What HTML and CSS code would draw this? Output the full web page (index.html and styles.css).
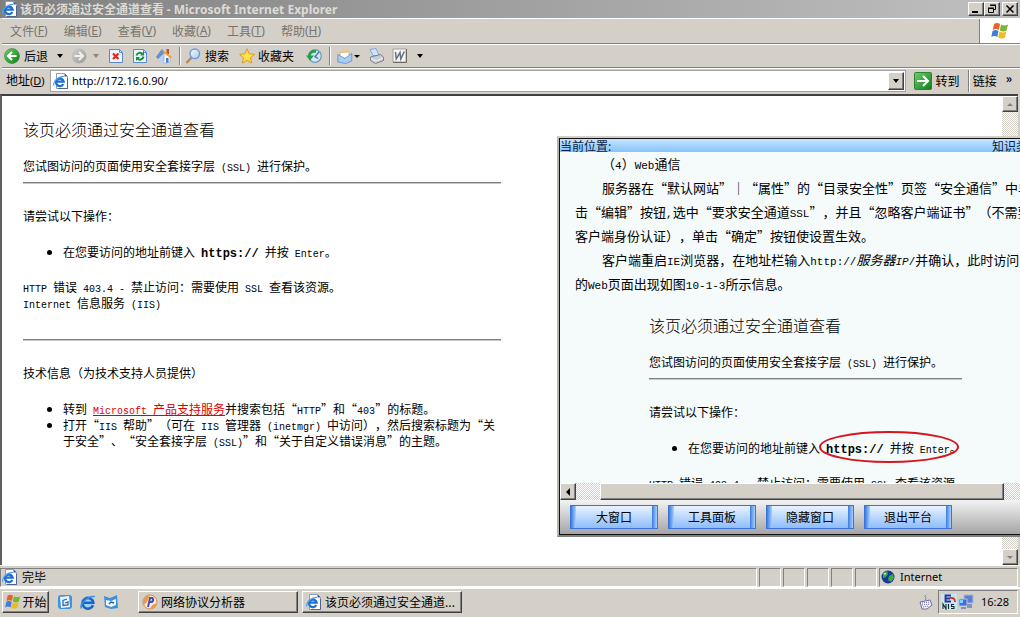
FILE: index.html
```html
<!DOCTYPE html>
<html lang="zh-CN">
<head>
<meta charset="utf-8">
<title>该页必须通过安全通道查看</title>
<link rel="stylesheet" href="styles.css">
</head>
<body>
<svg class="defs" aria-hidden="true">
  <defs>
    <linearGradient id="green" x1="0" y1="0" x2="1" y2="1"><stop offset="0" stop-color="#6fce6a"/><stop offset="1" stop-color="#0f7d1c"/></linearGradient>
    <linearGradient id="glass" x1="0" y1="0" x2="1" y2="1"><stop offset="0" stop-color="#ffffff"/><stop offset="1" stop-color="#9fc6f2"/></linearGradient>
    <linearGradient id="gray" x1="0" y1="0" x2="1" y2="1"><stop offset="0" stop-color="#cfcfcd"/><stop offset="1" stop-color="#9b9b99"/></linearGradient>
    <symbol id="page" viewBox="0 0 16 16">
      <path d="M3.5 .5h8l3 3v12h-11z" fill="#fdfdff" stroke="#8d9dbf"/>
      <path d="M11.5.5v3h3z" fill="#34548f"/>
      <path d="M14.5 5v10.500H5" fill="none" stroke="#4d628e"/>
      <path d="M10.300 11A3.800 3.800 0 1 1 10.600 8.600H3.500" fill="none" stroke="#1d6fd0" stroke-width="2.300"/>
      <path d="M.8 12.500C-.5 8.500 6 3 11 3.500" fill="none" stroke="#4ba0ee" stroke-width="1.200"/>
    </symbol>
    <symbol id="ie" viewBox="0 0 16 16">
      <circle cx="8" cy="8.500" r="6.600" fill="#9fd2f7"/>
      <path d="M13 11.200A5.400 5.400 0 1 1 13.300 8.800H4" fill="none" stroke="#1a66c4" stroke-width="2.600"/>
      <path d="M1.500 14.500C-1 10 8 1.500 14.800 2.500" fill="none" stroke="#3b8fe0" stroke-width="1.500"/>
    </symbol>
    <symbol id="flag" viewBox="0 0 20 20">
      <path d="M4 3q3-2 6 0L8.800 9q-3-2-6 0z" fill="#e8622c"/>
      <path d="M11 3.500q3 2 7 0L16.500 9.500q-3 2-6.700 0z" fill="#7cb62f"/>
      <path d="M2.500 10q3-2 6 0L7.300 16q-3-2-6 0z" fill="#3e7fdb"/>
      <path d="M9.500 10.500q3 2 6.800 0L15 16.500q-3 2-6.800 0z" fill="#f4b91f"/>
    </symbol>
    <symbol id="sheet" viewBox="0 0 16 16">
      <path d="M1.500 1.500h10l3 3v10h-13z" fill="#eaf3ff" stroke="#5a8ccf"/>
      <path d="M11.500 1.500v3h3" fill="none" stroke="#5a8ccf"/>
    </symbol>
  </defs>
</svg>

<header class="titlebar">
  <svg class="ic"><use href="#page"/></svg>
  <h1>该页必须通过安全通道查看 <span class="ui">- Microsoft Internet Explorer</span></h1>
  <div class="winbtns">
    <button class="bevel" aria-label="最小化"><svg viewBox="0 0 12 10"><path d="M2 7h6v2H2z"/></svg></button>
    <button class="bevel" aria-label="还原"><svg viewBox="0 0 12 10"><path d="M4.500 1.500h5v4h-2M4 1h6M2.500 4.500h5v4h-5zM2 4h6" fill="none" stroke="#000"/></svg></button>
    <button class="bevel close" aria-label="关闭"><svg viewBox="0 0 12 10"><path d="M2.500 1.500l7 7M9.500 1.500l-7 7" stroke="#000" stroke-width="1.500"/></svg></button>
  </div>
</header>

<nav class="menubar">
  <button>文件<span class="ui">(<u>F</u>)</span></button>
  <button>编辑<span class="ui">(<u>E</u>)</span></button>
  <button>查看<span class="ui">(<u>V</u>)</span></button>
  <button>收藏<span class="ui">(<u>A</u>)</span></button>
  <button>工具<span class="ui">(<u>T</u>)</span></button>
  <button>帮助<span class="ui">(<u>H</u>)</span></button>
  <div class="brand"><svg width="22" height="20"><use href="#flag"/></svg></div>
</nav>

<div class="toolbar">
  <button><svg class="ic" viewBox="0 0 16 16"><circle cx="8" cy="8" r="7.500" fill="url(#green)" stroke="#2b8a33" stroke-width=".6"/><path d="M12.500 8H4.500M8 4L4 8l4 4" fill="none" stroke="#fff" stroke-width="2"/></svg>后退</button>
  <button class="drop" aria-label="后退列表"><i></i></button>
  <button aria-label="前进"><svg class="ic" viewBox="0 0 16 16"><circle cx="8" cy="8" r="7.500" fill="url(#gray)"/><path d="M3.500 8h8M8 4l4 4-4 4" fill="none" stroke="#f1f1ef" stroke-width="2"/></svg></button>
  <button class="drop off" aria-label="前进列表"><i></i></button>
  <button class="solo" aria-label="停止"><svg class="ic" viewBox="0 0 16 16"><use href="#sheet"/><path d="M5 5.500l5.500 5.500M10.500 5.500L5 11" stroke="#dc2a1c" stroke-width="2.200"/></svg></button>
  <button class="solo" aria-label="刷新"><svg class="ic" viewBox="0 0 16 16"><use href="#sheet"/><path d="M4.500 7.500C5 4.500 9 4 10.500 6M11.500 8.500C11 12 7 12.500 5.500 10.500" fill="none" stroke="#189030" stroke-width="2"/><path d="M12 3.500v4H8zM4 13V9h4z" fill="#189030"/></svg></button>
  <button class="solo" aria-label="主页"><svg class="ic" viewBox="0 0 16 16"><path d="M10.500 1h2.500v5h-2.500z" fill="#c8502c"/><path d="M3 8v6.500l5 1V6z" fill="#b9d0f0"/><path d="M8 5v10.500l6-1.500V8z" fill="#f5f9ff" stroke="#88a6d4" stroke-width=".6"/><path d="M10 10h2.500v4.300l-2.500.6z" fill="#4a7bc5"/><path d="M6 1l10 8-1.500 1.500L8 5 2 11 0 9z" fill="#f0a23c"/><path d="M0 9l6-8 2 4-6 6z" fill="#5d93dd"/></svg></button>
  <span class="sep"></span>
  <button><svg class="ic" viewBox="0 0 16 16"><path d="M6.500 9.500l-5 5.500" stroke="#b58a55" stroke-width="2.400"/><circle cx="9.800" cy="5.800" r="4.800" fill="url(#glass)" stroke="#6c9bd6" stroke-width="1.300"/></svg>搜索</button>
  <button class="fav"><svg class="ic" viewBox="0 0 16 16"><path d="M8 .8l2.200 4.900 5.300.6-4 3.500 1.200 5.300L8 12.400l-4.700 2.700 1.200-5.300-4-3.500 5.300-.6z" fill="#ffe04a" stroke="#d99b1c"/></svg>收藏夹</button>
  <button class="hist" aria-label="历史"><svg class="ic" viewBox="0 0 16 16"><circle cx="9" cy="8" r="6.300" fill="#cfe5fa" stroke="#6d9fae" stroke-width="1.300"/><path d="M13 4L9 8.500l3 2" fill="none" stroke="#4c6f9e" stroke-width="1.300"/><path d="M3.500 9C3 5 6 3 10 3.500" fill="none" stroke="#26a046" stroke-width="2.600"/><path d="M0 7.500h8L4 12.500z" fill="#26a046"/></svg></button>
  <span class="sep"></span>
  <button class="mail" aria-label="邮件"><svg class="ic" viewBox="0 0 16 16"><path d="M1 6l7-5 6 4v9H1z" fill="#f6c679"/><path d="M3 4.500l9-.5v6H3z" fill="#fff" stroke="#d7a661" stroke-width=".7"/><path d="M.8 6.500l7 4 7-5V13l-6 2.500-8-1.500z" fill="#a7cdf5" stroke="#5d8ecf" stroke-width=".8"/></svg><i></i></button>
  <button class="print" aria-label="打印"><svg class="ic" viewBox="0 0 16 16"><path d="M2 1.500l6-1 3 7H5z" fill="#cfe3fb" stroke="#6f9bd5" stroke-width=".8"/><path d="M2.500 9l10-2.500 3 2.500v3.500l-8 3-5-3z" fill="#c9ccd2" stroke="#737985" stroke-width=".9"/><path d="M3 10.500l5 2.500 7-3" fill="none" stroke="#f8f8f8"/></svg></button>
  <button class="word" aria-label="编辑"><svg class="ic" viewBox="0 0 16 16"><path d="M1 1h13v13H1z" fill="#f7f6f2" stroke="#a5a39e"/><path d="M14.500 1v13.500H1" fill="none" stroke="#6b6964"/><path d="M3.500 4l.7 7L8 4.500l.8 6.500L12.300 3.500" fill="none" stroke="#66727f" stroke-width="1.500"/></svg></button>
  <button class="drop" aria-label="编辑列表"><i></i></button>
</div>

<form class="address">
  <label for="url">地址<span class="ui">(<u>D</u>)</span></label>
  <div class="combo">
    <svg class="ic"><use href="#page"/></svg>
    <input id="url" class="ui" type="text" value="http://172.16.0.90/">
    <button type="button" class="bevel" aria-label="展开"><i></i></button>
  </div>
  <button type="button" class="go"><svg viewBox="0 0 18 18" width="18" height="18"><rect x=".5" y=".5" width="17" height="17" rx="1" fill="url(#green)" stroke="#2d8435"/><path d="M3 9h11M9 4l5 5-5 5" fill="none" stroke="#fff" stroke-width="2"/></svg>转到</button>
  <button type="button" class="links">链接<span class="more">»</span></button>
</form>

<div class="view">
  <main class="doc">
    <h2>该页必须通过安全通道查看</h2>
    <p>您试图访问的页面使用安全套接字层<span class="m"> (SSL) </span>进行保护。</p>
    <hr>
    <p class="try">请尝试以下操作：</p>
    <ul><li>在您要访问的地址前键入<span class="m"> <b>https://</b> </span>并按<span class="m"> Enter</span>。</li></ul>
    <p class="err"><span class="m">HTTP </span>错误<span class="m"> 403.4 - </span>禁止访问：需要使用<span class="m"> SSL </span>查看该资源。<br><span class="m">Internet </span>信息服务<span class="m"> (IIS)</span></p>
    <hr>
    <p class="tech">技术信息（为技术支持人员提供）</p>
    <ul>
      <li>转到<span class="m"> </span><a href="#"><span class="m">Microsoft </span>产品支持服务</a>并搜索包括“<span class="m">HTTP</span>”和“<span class="m">403</span>”的标题。</li>
      <li>打开“<span class="m">IIS </span>帮助”（可在<span class="m"> IIS </span>管理器<span class="m"> (inetmgr) </span>中访问），然后搜索标题为“关于安全”、“安全套接字层<span class="m"> (SSL)</span>”和“关于自定义错误消息”的主题。</li>
    </ul>
  </main>
  <div class="vscroll dither">
    <button class="bevel" aria-label="向上"><i class="up"></i></button>
    <button class="bevel" aria-label="向下"><i></i></button>
  </div>
</div>

<footer class="status">
  <div class="pane main"><svg class="ic"><use href="#page"/></svg>完毕</div>
  <div class="pane"></div><div class="pane"></div><div class="pane"></div><div class="pane"></div><div class="pane"></div>
  <div class="pane zone"><svg class="ic" viewBox="0 0 16 16"><circle cx="8" cy="8" r="6.500" fill="#163a9c"/><path d="M3 4l4-2 1 3-2 3-3 1zM9 7l4-2 1 4-3 4-3-2z" fill="#3cab3b"/><path d="M4 4h2v1.500H4z" fill="#aee7ff"/></svg><span class="ui">Internet</span></div>
</footer>

<div class="taskbar">
  <button class="bevel start"><svg width="18" height="18"><use href="#flag"/></svg>开始</button>
  <div class="quick">
    <button aria-label="显示桌面"><svg class="ic" viewBox="0 0 16 16"><rect x="1" y="1" width="14" height="14" rx="3" fill="#3e93de"/><path d="M3 3l9-1 1 11-9 1z" fill="#eef6ff"/><path d="M10 5L6 6.500v5l5-.5V8L8 9" fill="none" stroke="#2a6bb4" stroke-width="1.300"/></svg></button>
    <button aria-label="浏览器"><svg class="ic"><use href="#ie"/></svg></button>
    <button aria-label="邮件程序"><svg class="ic" viewBox="0 0 16 16"><path d="M1 2l6 2 7-3 1 13-7 1-6-2z" fill="#3c91dc"/><path d="M3 6l5 1 5-2v6l-5 2-5-2z" fill="#f1f7ff"/><path d="M6 10l2-2 3 1" fill="none" stroke="#25609f" stroke-width="1.500"/></svg></button>
  </div>
  <button class="bevel task"><svg class="ic" viewBox="0 0 16 16"><circle cx="8" cy="8" r="7" fill="#f7efe4" stroke="#d08a4a"/><path d="M8 1a7 7 0 0 0-6 10l3-3z" fill="#e89a4e"/><path d="M15 9a7 7 0 0 1-7 6l2-4z" fill="#e89a4e"/><path d="M6 13L8 4h2.500q1.500 2-.5 4H8" fill="none" stroke="#5546b0" stroke-width="2"/></svg>网络协议分析器</button>
  <button class="bevel task"><svg class="ic"><use href="#page"/></svg>该页必须通过安全通道...</button>
  <svg class="ic ime" viewBox="0 0 16 16"><path d="M8 1c-3 2 2 3-1 5" fill="none" stroke="#7e7e92"/><path d="M2 8l10-2 2 5-5 4H4z" fill="#f3f3fb" stroke="#6a6fa6"/><path d="M4 9l8-1M4 11l8-1M5 13l6-1" stroke="#6a6fa6" stroke-dasharray="1 1"/></svg>
  <div class="tray">
    <svg class="ic" viewBox="0 0 16 16"><path d="M0 0h16v16H0z" fill="#c5e8ee"/><path d="M10 1.500H4.500v6H10M4.500 4.500H9" fill="none" stroke="#26359c" stroke-width="1.800"/><path d="M9 4q5-1 5 4" fill="none" stroke="#d42b2b" stroke-width="1.800"/><path d="M2 15v-5l3 5v-5M7.500 10v5M13 10.500h-2.500v2H13v2h-3" fill="none" stroke="#142a2e" stroke-width="1.100"/></svg>
    <svg class="ic" viewBox="0 0 16 16"><path d="M6 1h9v8H6z" fill="#5c7fd0" stroke="#a9b7d8"/><path d="M1 5h8v7H1z" fill="#3f6dd8" stroke="#b9c4e0"/><path d="M3 13h5v2H3zM9 10h5v4H9z" fill="#8593b8"/><path d="M2 6h3v3H2z" fill="#7fd3f6"/></svg>
    <time class="ui">16:28</time>
  </div>
</div>

<section class="popup" aria-label="学习平台">
  <header><span>当前位置:</span><span class="know">知识类</span></header>
  <div class="lesson">
    <div class="text">
      <p class="in">（<span class="m">4</span>）<span class="m">Web</span>通信</p>
      <p class="in">服务器在“默认网站”｜“属性”的“目录安全性”页签“安全通信”中单</p>
      <p>击“编辑”按钮<span class="m">,</span>选中“要求安全通道<span class="m">SSL</span>”，并且“忽略客户端证书”（不需要</p>
      <p>客户端身份认证），单击“确定”按钮使设置生效。</p>
      <p class="in">客户端重启<span class="m">IE</span>浏览器，在地址栏输入<span class="m">http://</span><em>服务器<span class="m">IP</span></em><span class="m">/</span>并确认，此时访问</p>
      <p>的<span class="m">Web</span>页面出现如图<span class="m">10-1-3</span>所示信息。</p>
    </div>
    <div class="figure">
      <h3>该页必须通过安全通道查看</h3>
      <p>您试图访问的页面使用安全套接字层<span class="m"> (SSL) </span>进行保护。</p>
      <hr>
      <p class="try">请尝试以下操作：</p>
      <ul><li>在您要访问的地址前键入<span class="mark"><span class="m"> <b>https://</b> </span>并按<span class="m"> Enter</span>。<svg viewBox="0 0 140 32"><ellipse cx="70" cy="16" rx="69" ry="15" fill="none" stroke="#d8141e" stroke-width="2"/></svg></span></li></ul>
      <p class="err"><span class="m">HTTP </span>错误<span class="m"> 403.4 - </span>禁止访问：需要使用<span class="m"> SSL </span>查看该资源</p>
    </div>
  </div>
  <div class="hscroll dither">
    <button class="bevel" aria-label="向左"><i class="left"></i></button>
    <div class="bevel thumb"></div>
  </div>
  <div class="actions">
    <button>大窗口</button>
    <button>工具面板</button>
    <button>隐藏窗口</button>
    <button>退出平台</button>
  </div>
</section>
</body>
</html>
```
FILE: styles.css
```css
* { box-sizing: border-box; margin: 0; padding: 0; }

body {
  position: relative;
  display: flex;
  flex-direction: column;
  height: 100vh;
  overflow: hidden;
  background: #d4d0c8;
  color: #000;
  font: 12px/16px "Noto Sans CJK SC", sans-serif;
  text-spacing-trim: space-all;
  white-space: nowrap;
}

button {
  display: flex;
  align-items: center;
  background: none;
  border: 0;
  color: inherit;
  font: inherit;
  white-space: nowrap;
}

i {
  border: 3px solid transparent;
  border-top-color: currentColor;
  border-bottom: 0;
}
i.up { border: 3px solid transparent; border-bottom-color: currentColor; border-top: 0; }
i.left { border: 4px solid transparent; border-right-color: currentColor; border-left: 0; }

.defs { position: absolute; width: 0; height: 0; }
.ic { width: 16px; height: 16px; flex: none; }
.ui { font-family: "Noto Sans", "Noto Sans CJK SC", sans-serif; font-size: 11px; }
.m {
  font-family: "Liberation Mono", monospace;
  font-size: 10px;
  line-height: 10px;
  white-space: pre-wrap;
}
.m b { font-size: 12px; }

.bevel {
  justify-content: center;
  background: #d4d0c8;
  border: 1px solid;
  border-color: #fff #404040 #404040 #fff;
  box-shadow: inset -1px -1px #808080;
}
.dither { background: repeating-conic-gradient(#fff 0 25%, #d4d0c8 0 50%) 0 0 / 2px 2px; }

/* Title bar */
.titlebar {
  display: flex;
  align-items: center;
  gap: 2px;
  height: 18px;
  padding: 0 2px;
  background: linear-gradient(90deg, #808080, #c0c0c0);
  color: #dedbd4;
}
.titlebar h1 { flex: 1; font-size: 12px; line-height: 16px; }
.titlebar .ui { font-size: 12px; }
.winbtns { display: flex; color: #000; }
.winbtns button { width: 16px; height: 14px; }
.winbtns svg { width: 12px; height: 10px; }
.winbtns .close { margin-left: 2px; }

/* Menu, tool and address bars */
.menubar {
  display: flex;
  height: 26px;
  margin-left: 2px;
  border-top: 1px solid #fff;
  border-bottom: 1px solid #808080;
  color: #77746e;
}
.menubar button { padding: 0 8px; }
.menubar .ui { font-size: 12px; }
.brand {
  display: flex;
  align-items: center;
  justify-content: center;
  width: 41px;
  margin-left: auto;
  background: #fff;
  border-left: 1px solid #808080;
}

.toolbar {
  display: flex;
  align-items: center;
  height: 24px;
  margin-left: 2px;
  padding-left: 2px;
  border-top: 1px solid #fff;
  border-bottom: 1px solid #808080;
}
.toolbar button { gap: 4px; }
.toolbar .drop { width: 23px; justify-content: center; }
.toolbar .off { width: 17px; color: #8a8780; }
.toolbar .solo { width: 24px; justify-content: center; }
.toolbar .fav { margin-left: 10px; gap: 3px; }
.toolbar .hist { margin: 0 4px 0 12px; }
.toolbar .mail { gap: 1px; margin-left: 2px; }
.toolbar .print,
.toolbar .word { margin-left: 8px; }
.sep {
  width: 2px;
  height: 18px;
  margin: 0 4px 0 3px;
  border-left: 1px solid #808080;
  border-right: 1px solid #fff;
}

.address {
  display: flex;
  align-items: center;
  height: 24px;
  margin-left: 2px;
  padding-left: 4px;
  border-top: 1px solid #fff;
}
.address label { width: 44px; }
.combo {
  display: flex;
  align-items: center;
  flex: 1;
  height: 22px;
  padding: 1px 1px 1px 2px;
  background: #fff;
  border: 1px solid;
  border-color: #404040 #fff #fff #404040;
  outline: 1px solid #a5a29b;
  outline-offset: -1px;
}
.combo input {
  flex: 1;
  min-width: 0;
  padding-left: 3px;
  border: 0;
  outline: 0;
  background: none;
}
.combo button { width: 16px; height: 18px; }
.combo i, .drop i { border-width: 4px 3px 0; }
.go { gap: 4px; padding: 0 8px; }
.links {
  gap: 9px;
  height: 22px;
  padding: 0 8px 0 4px;
  border-left: 1px solid #808080;
  box-shadow: inset 1px 0 #fff;
}
.more { font-weight: bold; line-height: 12px; padding-bottom: 6px; }

/* Page view */
.view {
  display: flex;
  flex: 1;
  min-height: 0;
  margin: 2px 2px 0 0;
  background: #fff;
  border-top: 2px solid #404040;
  border-left: 2px solid #606060;
}
.doc {
  flex: 1;
  min-width: 0;
  max-width: 520px;
  padding: 23px 21px;
  white-space: normal;
}
h2, h3 { margin-bottom: 19px; font-size: 16px; line-height: 20px; font-weight: 300; }
hr {
  height: 2px;
  border: 0;
  border-top: 1px solid #808080;
  border-bottom: 1px solid #c8c8c8;
  margin: 8px 0 24px;
}
.try { margin-bottom: 20px; }
ul { padding-left: 40px; }
.err { margin: 19px 0 28px; }
.tech { margin-bottom: 20px; }
a { color: #e00000; }

.vscroll {
  display: flex;
  flex-direction: column;
  justify-content: space-between;
  width: 16px;
  margin-left: auto;
  color: #808080;
}
.vscroll button { width: 16px; height: 16px; }

/* Status bar */
.status {
  display: flex;
  align-items: center;
  gap: 2px;
  height: 22px;
  padding: 2px 2px 1px 0;
  border-top: 1px solid #fff;
}
.pane {
  display: flex;
  align-items: center;
  gap: 4px;
  width: 22px;
  height: 19px;
  border: 1px solid;
  border-color: #808080 #fff #fff #808080;
}
.main { flex: 1; padding-left: 1px; }
.zone { width: 139px; }

/* Task bar */
.taskbar {
  display: flex;
  align-items: center;
  gap: 4px;
  height: 30px;
  padding: 0 2px 2px;
  border-top: 2px solid #fff;
}
.start { width: 47px; height: 22px; }
.quick { display: flex; gap: 7px; margin: 0 15px 0 4px; }
.task { width: 160px; height: 22px; gap: 3px; padding-left: 3px; justify-content: flex-start; }
.ime { margin-left: auto; }
.tray {
  display: flex;
  align-items: center;
  gap: 1px;
  height: 24px;
  padding: 0 8px 0 2px;
  border: 1px solid;
  border-color: #808080 #fff #fff #808080;
}
.tray time { margin-left: 6px; }

/* Floating lesson window, running off the right edge of the desktop */
.popup {
  position: absolute;
  left: 557px;
  right: 0;
  top: 136px;
  display: flex;
  flex-direction: column;
  overflow: hidden;
  background: #f5fafa;
  border: 2px solid #d4d0c8;
  border-right: 0;
  border-bottom-color: #808080;
  border-left-color: #b8b5ae;
}
.popup .m { white-space: pre; }
.popup header {
  display: flex;
  justify-content: space-between;
  height: 14px;
  line-height: 13px;
  border-top: 1px solid #101010;
  border-left: 1px solid #101010;
  background: linear-gradient(#c6e4ff, #86c4fa);
  color: #0a1c40;
}
.know { width: 28px; }
.lesson {
  height: 331px;
  padding-left: 15px;
  overflow: hidden;
  border-left: 1px solid #101010;
}
.text { font-size: 13px; line-height: 24px; }
.text .m { font-size: 11px; }
.text .in { padding-left: 27px; }
.figure { width: 313px; margin: 19px 0 0 74px; }
.figure ul { padding-left: 39px; }
.mark { position: relative; }
.mark svg { position: absolute; left: -1px; top: -8px; width: 140px; height: 32px; }

.hscroll { display: flex; gap: 24px; height: 17px; padding-right: 16px; border-left: 1px solid #101010; }
.hscroll button { width: 16px; }
.thumb { flex: 1; }

.actions {
  display: flex;
  gap: 10px;
  height: 35px;
  padding: 5px 10px;
  border-left: 1px solid #101010;
  border-bottom: 1px solid #101010;
  background: linear-gradient(#f4f4f4, #a4a4a4);
}
.actions button {
  justify-content: center;
  width: 88px;
  height: 24px;
  border: 1px solid #3a74d8;
  background:
    linear-gradient(90deg, #3a7be0, #a9d2ff) 0 0 / 5px 100% no-repeat,
    linear-gradient(90deg, #3a7be0, #a9d2ff) 100% 0 / 5px 100% no-repeat,
    linear-gradient(#e8f4ff, #8dbdfb);
}
```
